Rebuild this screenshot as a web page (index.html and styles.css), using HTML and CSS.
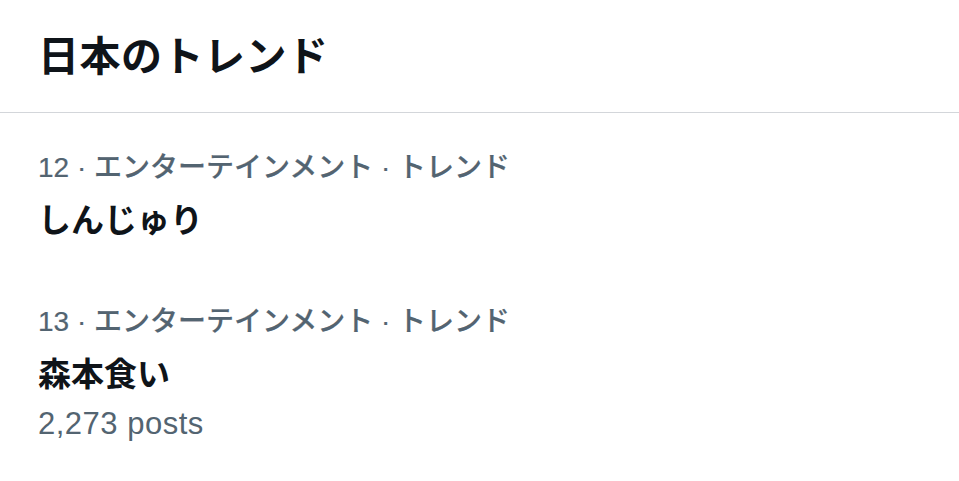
FILE: index.html
```html
<!DOCTYPE html>
<html>
<head>
<meta charset="UTF-8">
<title>日本のトレンド</title>
<link rel="stylesheet" href="styles.css">
</head>
<body>
<div class="panel">
  <div class="panel-head">
    <h2>日本のトレンド</h2>
  </div>

  <div class="trend">
    <div class="meta">12 · エンターテインメント · トレンド</div>
    <div class="name">しんじゅり</div>
  </div>

  <div class="trend">
    <div class="meta">13 · エンターテインメント · トレンド</div>
    <div class="name">森本食い</div>
    <div class="count">2,273 posts</div>
  </div>
</div>
</body>
</html>
```

FILE: styles.css
```css
body { margin: 0; background: #fff; font-family: "Liberation Sans", "Noto Sans CJK JP", sans-serif; color: #0f1419; }
.panel { width: 959px; }
.panel-head { height: 113px; display: flex; align-items: center; padding: 0 38px 6px; border-bottom: 1px solid #d3d6da; box-sizing: border-box; }
.panel-head h2 { margin: 0; font-size: 41px; font-weight: bold; font-family: "Noto Sans CJK JP", sans-serif; letter-spacing: 0.5px; }
.trend { padding: 29px 38px 23px; }
.meta { font-size: 28px; line-height: 51px; color: #536471; font-weight: 500; -webkit-text-stroke: 0.2px #536471; }
.name { font-size: 33px; line-height: 51px; font-weight: bold; font-family: "Noto Sans CJK JP", sans-serif; }
.count { font-size: 31px; line-height: 51px; color: #536471; letter-spacing: 0.5px; }
```
